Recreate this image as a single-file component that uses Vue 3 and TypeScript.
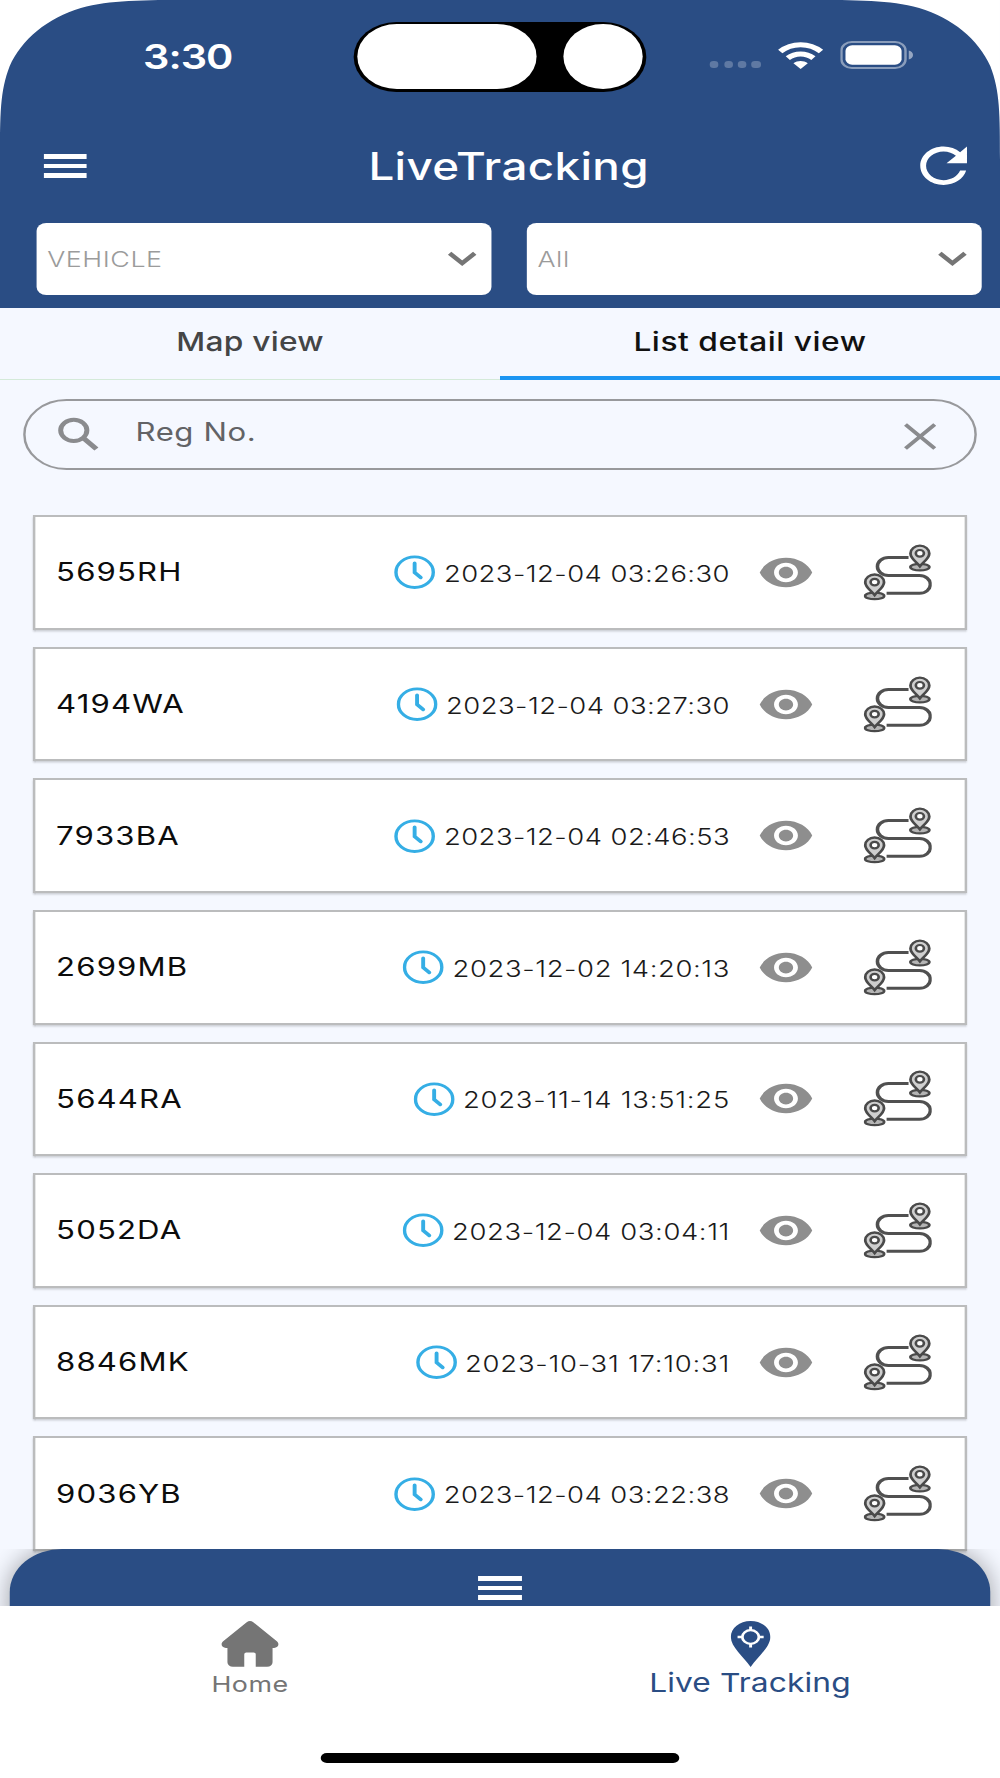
<script setup lang="ts">
interface Vehicle {
  reg: string
  time: string
}

const vehicles: Vehicle[] = [
  { reg: '5695RH', time: '2023-12-04 03:26:30' },
  { reg: '4194WA', time: '2023-12-04 03:27:30' },
  { reg: '7933BA', time: '2023-12-04 02:46:53' },
  { reg: '2699MB', time: '2023-12-02 14:20:13' },
  { reg: '5644RA', time: '2023-11-14 13:51:25' },
  { reg: '5052DA', time: '2023-12-04 03:04:11' },
  { reg: '8846MK', time: '2023-10-31 17:10:31' },
  { reg: '9036YB', time: '2023-12-04 03:22:38' },
]

const filters: string[] = ['VEHICLE', 'All']

// The digit 1 is narrow, so timestamps rich in ones get a little more tracking.
const tracking = (time: string): string => {
  const ones = time.split('1').length - 1
  return `${(0.3 + ones * 0.065).toFixed(3)}px`
}
</script>

<template>
  <div class="viewport">
    <div class="phone">
      <header class="header">
        <div class="status">
          <div class="clock-text"><span>3:30</span></div>
          <div class="island">
            <i class="pill"></i>
            <i class="lens"></i>
          </div>
          <div class="signals">
            <div class="dots"><i></i><i></i><i></i><i></i></div>
            <svg class="wifi" width="37" height="27" viewBox="0 0 37 27">
              <g fill="none" stroke="#fff" stroke-width="5">
                <path d="M1.8 9.6C11 .3 26 .3 35.2 9.6" />
                <path d="M8 16.2c6-5.600 15-5.600 21 0" />
              </g>
              <path d="M18.500 27l-5.900-5.700c3.400-3 8.400-3 11.800 0z" fill="#fff" />
            </svg>
            <svg class="battery" width="61" height="28" viewBox="0 0 61 28">
              <rect x="1" y="1" width="52.500" height="26" rx="8.500" fill="none" stroke="#fff" stroke-opacity=".45" stroke-width="2" />
              <rect x="4.300" y="4.300" width="46" height="19.400" rx="5.500" fill="#fff" />
              <path d="M56.200 9.500c4.600 1.400 4.600 7.600 0 9z" fill="#fff" fill-opacity=".5" />
            </svg>
          </div>
        </div>
        <div class="appbar">
          <div class="menu"><i></i><i></i><i></i></div>
          <h1>LiveTracking</h1>
          <svg class="refresh" width="57.500" height="57.500" viewBox="0 0 24 24">
            <path fill="#fff" d="M17.65 6.35C16.2 4.9 14.21 4 12 4c-4.42 0-7.99 3.58-7.99 8s3.57 8 7.99 8c3.73 0 6.840-2.550 7.730-6h-2.080c-.82 2.330-3.040 4-5.650 4-3.310 0-6-2.690-6-6s2.690-6 6-6c1.660 0 3.140.69 4.220 1.780L13 11h7V4l-2.350 2.350z" />
          </svg>
        </div>
        <div class="filters">
          <div v-for="f in filters" :key="f" class="select">
            <span>{{ f }}</span>
            <svg width="24" height="16" viewBox="0 0 24 16">
              <path d="M1.700 2.200L12 12.200l10.300-10" fill="none" stroke="#757575" stroke-width="4" />
            </svg>
          </div>
        </div>
        <svg class="corner" width="162" height="162" viewBox="0 0 162 162">
          <path fill="#fff" d="M0 0H160.500C114.300 0 91.200 0 66.300 7.900C39.100 17.800 17.800 39.100 7.900 66.300C0 91.200 0 114.300 0 160.500z" />
        </svg>
        <svg class="corner right" width="162" height="162" viewBox="0 0 162 162">
          <path fill="#fff" d="M0 0H160.500C114.300 0 91.200 0 66.300 7.900C39.100 17.800 17.800 39.100 7.900 66.300C0 91.200 0 114.300 0 160.500z" />
        </svg>
      </header>

      <nav class="tabs">
        <div class="tab"><span>Map view</span></div>
        <div class="tab active"><span>List detail view</span></div>
      </nav>

      <main class="content">
        <div class="search">
          <svg width="34.500" height="34" viewBox="0 0 34 34" preserveAspectRatio="none">
            <circle cx="13.300" cy="13.300" r="10.600" fill="none" stroke="#8a8b8e" stroke-width="4" />
            <path d="M21.500 21.500L31.600 32" stroke="#8a8b8e" stroke-width="4.600" />
          </svg>
          <span>Reg No.</span>
          <svg class="clear" width="27" height="27" viewBox="0 0 27 27">
            <path d="M1.500 1.500l24 24M25.500 1.500l-24 24" stroke="#8a8b8e" stroke-width="3.400" />
          </svg>
        </div>

        <div v-for="v in vehicles" :key="v.reg" class="card">
          <span class="reg">{{ v.reg }}</span>
          <svg class="clock" width="34" height="34" viewBox="0 0 34 34">
            <circle cx="17" cy="17.200" r="15.300" fill="none" stroke="#35aee5" stroke-width="2.800" />
            <path d="M17 8.200v9.300l5 5" fill="none" stroke="#35aee5" stroke-width="3.200" stroke-linecap="round" />
          </svg>
          <span class="time" :style="{ letterSpacing: tracking(v.time) }">{{ v.time }}</span>
          <svg class="eye" width="47" height="47" viewBox="0 0 24 24">
            <path fill="#8e8e8e" d="M12 4.500C7 4.500 2.730 7.610 1 12c1.730 4.390 6 7.500 11 7.500s9.270-3.110 11-7.500c-1.730-4.390-6-7.500-11-7.500zM12 17c-2.760 0-5-2.240-5-5s2.240-5 5-5 5 2.240 5 5-2.240 5-5 5zm0-8c-1.660 0-3 1.340-3 3s1.340 3 3 3 3-1.340 3-3-1.340-3-3-3z" />
          </svg>
          <svg class="route" width="56" height="57" viewBox="0 0 56 57">
            <path fill="none" stroke="#505050" stroke-width="2.900" d="M37 13.500H20.500a9 9 0 0 0 0 18H46a8.900 8.900 0 0 1 0 17.800H19" />
            <g v-for="p in [[46.3, 0.800], [9.2, 29.600]]" :key="p[0]" :transform="`translate(${p[0]} ${p[1]})`">
              <ellipse cx="0" cy="22.300" rx="7.800" ry="3.300" fill="#b5b5b5" stroke="#4a4a4a" stroke-width="2.200" />
              <path fill="#cfcfcf" stroke="#4a4a4a" stroke-width="2.300" d="M0 21.500c-2.600-4.300-7.700-7.700-7.700-12.900a7.700 7.700 0 0 1 15.400 0c0 5.200-5.100 8.600-7.700 12.900z" />
              <circle cx="0" cy="8.500" r="3.300" fill="#fff" stroke="#4a4a4a" stroke-width="2.200" />
            </g>
          </svg>
        </div>
      </main>

      <div class="sheet-clip">
        <div class="sheet">
          <div class="menu"><i></i><i></i><i></i></div>
        </div>
      </div>

      <footer class="bottom">
        <div class="links">
          <div class="link">
            <svg width="48" height="46" viewBox="0 0 48 46">
              <path fill="#757575" d="M21.300 1.200a4.300 4.300 0 0 1 5.400 0L46 20.300c2.600 2.700 1 6.700-2.300 6.700h-1.200v14.300a4.500 4.500 0 0 1-4.500 4.500h-9.300V33.300a1.700 1.700 0 0 0-1.700-1.700h-6a1.700 1.700 0 0 0-1.700 1.700v12.500H10a4.500 4.500 0 0 1-4.500-4.500V27H4.300C1 27-.6 23 2 20.300z" />
            </svg>
            <span>Home</span>
          </div>
          <div class="link current">
            <svg width="33" height="46" viewBox="0 0 33 46">
              <path fill="#2a4d84" d="M16.500 0C7.400 0 .3 7 .3 16c0 10 10.200 19.400 16.200 30 6-10.600 16.200-20 16.200-30 0-9-7.100-16-16.200-16z" />
              <circle cx="16.500" cy="16" r="6.800" fill="none" stroke="#fff" stroke-width="2.300" />
              <path d="M16.500 5.500v4M16.500 22.500v4M5.800 16h4M23.200 16h4" stroke="#fff" stroke-width="2.400" />
            </svg>
            <span>Live Tracking</span>
          </div>
        </div>
        <div class="indicator"></div>
      </footer>
    </div>
  </div>
</template>

<style>
body {
  margin: 0;
  background: #fff;
}
</style>

<style scoped>
.viewport {
  width: 1000px;
  height: 1778px;
  overflow: hidden;
}
/* the 820px layout is stretched horizontally to the full viewport width */
.phone {
  width: 820px;
  height: 1778px;
  transform: scaleX(1.219512);
  transform-origin: 0 0;
  display: flex;
  flex-direction: column;
  background: #f5f8ff;
  font-family: Inter, "Liberation Sans", sans-serif;
  overflow: hidden;
}
span, h1 {
  white-space: nowrap;
}
.header {
  position: relative;
  height: 308px;
  background: #2a4d84;
  flex: none;
}
.corner {
  position: absolute;
  left: 0;
  top: 0;
}
.corner.right {
  left: auto;
  right: 0;
  transform: scaleX(-1);
}
.status {
  display: grid;
  grid-template-columns: 290.400px 239.200px 1fr;
  height: 91.500px;
  padding-top: 21.500px;
  box-sizing: border-box;
}
.clock-text {
  padding-left: 117.300px;
  font-size: 34px;
  line-height: 70px;
  font-weight: 600;
  color: #fff;
  letter-spacing: -0.8px;
}
.island {
  display: flex;
  justify-content: space-between;
  box-sizing: border-box;
  height: 70px;
  padding: 2.300px;
  border-radius: 35px;
  background: #000;
}
.pill,
.lens {
  height: 65.400px;
  width: 147.500px;
  border-radius: 33px;
  background: #fff;
}
.lens {
  width: 65.600px;
}
.signals {
  display: flex;
  align-items: flex-start;
  padding-left: 52.600px;
}
.dots {
  display: flex;
  gap: 4.100px;
  padding-top: 39.500px;
}
.dots i {
  width: 7.300px;
  height: 7.300px;
  border-radius: 3px;
  background: rgba(255, 255, 255, 0.25);
}
.wifi {
  margin: 20px 0 0 14.300px;
}
.battery {
  margin: 19.500px 0 0 14.300px;
}
.appbar {
  display: flex;
  align-items: center;
  height: 131.500px;
  padding: 17.500px 17.400px 0 36px;
  box-sizing: border-box;
}
.menu {
  display: flex;
  flex-direction: column;
  gap: 5px;
}
.menu i {
  width: 34.600px;
  height: 4.600px;
  background: #fff;
}
h1 {
  flex: 1;
  margin: 0;
  padding: 1.500px 0 0 18.500px;
  text-align: center;
  font-size: 37.500px;
  font-weight: 500;
  color: #fff;
  line-height: 60px;
  letter-spacing: 0.3px;
}
.filters {
  display: flex;
  gap: 29.900px;
  padding: 0 15.400px 0 30.400px;
}
.select {
  flex: 1;
  display: flex;
  align-items: center;
  justify-content: space-between;
  height: 72px;
  padding: 0 11.900px 0 8.300px;
  border-radius: 8px;
  background: #fff;
  color: #9b9b9b;
  font-size: 22px;
  font-weight: 300;
  letter-spacing: 0.45px;
  box-sizing: border-box;
}
.tabs {
  flex: none;
  display: flex;
  height: 72px;
}
.tab {
  flex: 1;
  box-sizing: border-box;
  display: flex;
  justify-content: center;
  font-size: 26px;
  font-weight: 450;
  line-height: 67px;
  color: #444546;
  border-bottom: 1px solid #d4ead9;
  letter-spacing: 0.2px;
}
.tab.active {
  color: #111;
  border-bottom: 4.300px solid #1b95f2;
  letter-spacing: 0.45px;
}
.content {
  flex: none;
  height: 1169px;
  overflow: visible;
  box-sizing: border-box;
  padding: 19px 19.300px 0;
}
.search {
  height: 70.500px;
  box-sizing: border-box;
  border: 2px solid #98999c;
  border-radius: 36px;
  display: flex;
  align-items: center;
  padding: 0 30.500px 0 25.600px;
  margin-bottom: 45.700px;
}
.search span {
  flex: 1;
  margin-left: 29.700px;
  font-size: 25.500px;
  color: #626366;
  letter-spacing: 0.5px;
  line-height: 64px;
  padding-bottom: 5px;
}
.search .clear {
  margin-top: 5px;
}
.card {
  display: flex;
  align-items: center;
  height: 114.600px;
  margin: 0 7.500px 17px;
  padding: 0 27.300px 0 17.200px;
  box-sizing: border-box;
  border: 2px solid #bbbcbd;
  box-shadow: 0 1.500px 2px rgba(0, 0, 0, 0.25);
  background: #fff;
}
.reg {
  flex: 1;
  font-size: 25.500px;
  color: #0c0c0c;
  letter-spacing: 0.95px;
  padding-bottom: 1px;
}
.time {
  margin: 2px 22.300px 0 6.600px;
  font-size: 22.500px;
  font-weight: 300;
  color: #1a1a1a;
}
.route {
  margin-left: 40px;
}
.sheet-clip {
  position: relative;
  flex: none;
  height: 57px;
  overflow: hidden;
}
.sheet {
  height: 120px;
  margin: 0 7.800px;
  border-radius: 43px 43px 0 0;
  background: #2a4d84;
  box-shadow: 0 0 22px rgba(0, 0, 0, 0.35);
  display: flex;
  justify-content: center;
  padding-top: 27px;
  box-sizing: border-box;
}
.sheet .menu i {
  width: 36.600px;
}
.bottom {
  position: relative;
  flex: 1;
  background: #fff;
  display: flex;
  flex-direction: column;
  align-items: center;
  justify-content: space-between;
  padding: 15px 0 15.500px;
  box-sizing: border-box;
}
.links {
  display: flex;
  width: 100%;
}
.link {
  flex: 1;
  display: flex;
  flex-direction: column;
  align-items: center;
  font-size: 22px;
  line-height: 35px;
  letter-spacing: 0.4px;
  color: #757575;
}
.link.current {
  font-size: 26px;
  line-height: 32px;
  letter-spacing: 0.1px;
  color: #2a4d84;
}
.indicator {
  width: 293.500px;
  height: 9.800px;
  border-radius: 5px;
  background: #000;
}
</style>
